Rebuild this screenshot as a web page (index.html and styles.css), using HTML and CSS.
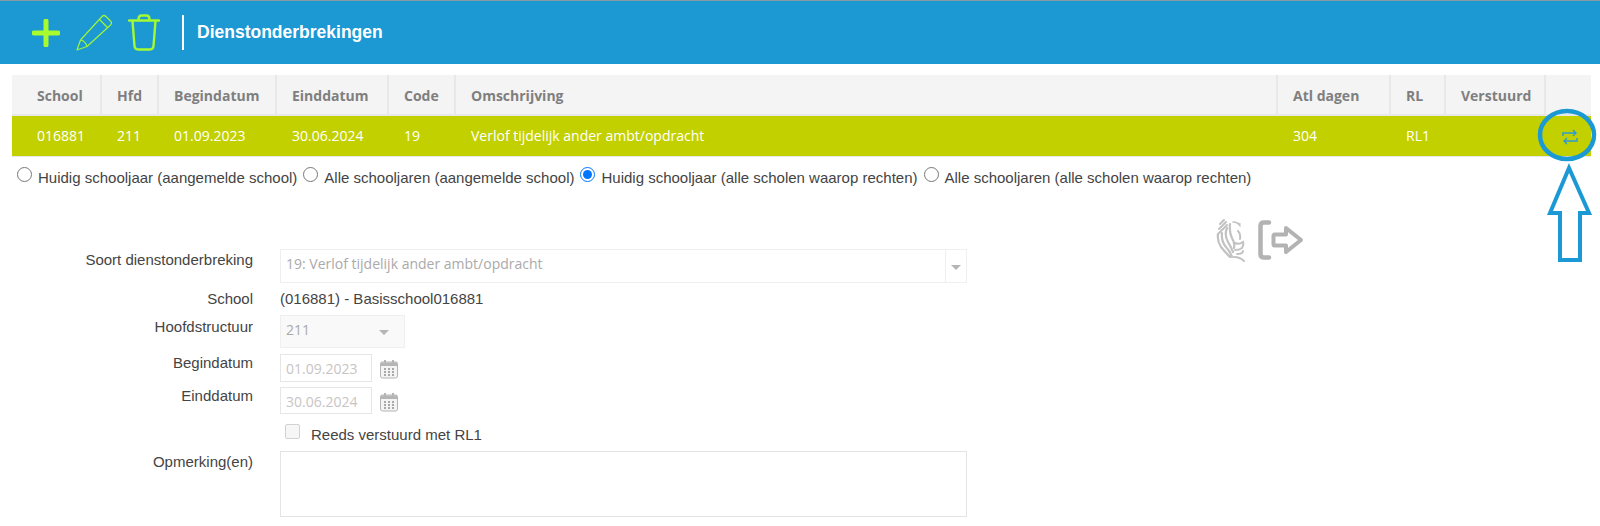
FILE: index.html
```html
<!DOCTYPE html>
<html lang="nl">
<head>
<meta charset="utf-8">
<title>Dienstonderbrekingen</title>
<link rel="stylesheet" href="styles.css">
</head>
<body>
<header class="topbar">
  <div class="tools">
    <svg class="ico plus" width="28" height="28" viewBox="0 0 28 28"><path d="M14 2v24M2 14h24" fill="none" stroke="#a8fb2c" stroke-width="5" stroke-linecap="round"/></svg>
    <svg class="ico pencil" width="36" height="37" viewBox="0 0 36 37"><path d="M1 36l3.500-10L26 2.500q2-2 4 0l4.500 4.500q2 2 0 4L11 32.500zM4.500 26q5 1 6.500 6.500M23 5l9 9" fill="none" stroke="#9cf53c" stroke-width="1.200" stroke-linejoin="round"/></svg>
    <svg class="ico trash" width="32" height="37" viewBox="0 0 32 37"><path d="M1 6.500h30M10.500 5.500q0-4 3-4h5q3 0 3 4M4.500 7l2 25q.3 3.500 3.500 3.500h12q3.200 0 3.500-3.500l2-25" fill="none" stroke="#a4fa30" stroke-width="2.400" stroke-linecap="round"/></svg>
  </div>
  <h1 class="title">Dienstonderbrekingen</h1>
</header>

<main class="page">
  <table class="grid">
    <colgroup>
      <col class="c1"><col class="c2"><col class="c3"><col class="c4"><col class="c5"><col class="c6"><col class="c7"><col class="c8"><col class="c9"><col class="c10">
    </colgroup>
    <thead>
      <tr>
        <th class="first">School</th><th>Hfd</th><th>Begindatum</th><th>Einddatum</th><th>Code</th><th>Omschrijving</th><th>Atl dagen</th><th>RL</th><th>Verstuurd</th><th></th>
      </tr>
    </thead>
    <tbody>
      <tr>
        <td class="first">016881</td><td>211</td><td>01.09.2023</td><td>30.06.2024</td><td>19</td><td>Verlof tijdelijk ander ambt/opdracht</td><td>304</td><td>RL1</td><td></td>
        <td class="action">
          <svg width="16" height="16" viewBox="0 0 16 16"><path d="M1 7V4h13M11 1l3 3-3 3M15 9v3H2M5 9l-3 3 3 3" fill="none" stroke="#2b9ad2" stroke-width="1.400"/></svg>
        </td>
      </tr>
    </tbody>
  </table>

  <div class="filters">
    <label class="filter"><input type="radio" name="scope">Huidig schooljaar (aangemelde school)</label>
    <label class="filter"><input type="radio" name="scope">Alle schooljaren (aangemelde school)</label>
    <label class="filter"><input type="radio" name="scope" checked>Huidig schooljaar (alle scholen waarop rechten)</label>
    <label class="filter"><input type="radio" name="scope">Alle schooljaren (alle scholen waarop rechten)</label>
  </div>

  <div class="content">
    <form class="form">
      <div class="row row-soort">
        <span class="lab">Soort dienstonderbreking</span>
        <div class="select wide"><span class="val">19: Verlof tijdelijk ander ambt/opdracht</span><span class="arrow"></span></div>
      </div>
      <div class="row row-school">
        <span class="lab">School</span>
        <span class="static">(016881) - Basisschool016881</span>
      </div>
      <div class="row row-hfd">
        <span class="lab">Hoofdstructuur</span>
        <div class="select narrow"><span class="val">211</span><span class="arrow plain"></span></div>
      </div>
      <div class="row row-begin">
        <span class="lab">Begindatum</span>
        <div class="date">01.09.2023</div>
        <svg class="cal" width="18" height="20" viewBox="0 0 18 20"><path d="M2 3h14q1.500 0 1.500 1.500V17q0 2-2 2h-13q-2 0-2-2V4.500Q.5 3 2 3z" fill="#f4f4f4" stroke="#b5b5b5"/><path d="M1 3.500h16V7H1z" fill="#b5b5b5"/><path d="M5 1v3M13 1v3" stroke="#b5b5b5" stroke-width="2"/><path d="M4 9h2v2H4zM8 9h2v2H8zM12 9h2v2h-2zM4 12h2v2H4zM8 12h2v2H8zM12 12h2v2h-2zM4 15h2v2H4zM8 15h2v2H8zM12 15h2v2h-2z" fill="#a8a8a8"/></svg>
      </div>
      <div class="row row-eind">
        <span class="lab">Einddatum</span>
        <div class="date">30.06.2024</div>
        <svg class="cal" width="18" height="20" viewBox="0 0 18 20"><path d="M2 3h14q1.500 0 1.500 1.500V17q0 2-2 2h-13q-2 0-2-2V4.500Q.5 3 2 3z" fill="#f4f4f4" stroke="#b5b5b5"/><path d="M1 3.500h16V7H1z" fill="#b5b5b5"/><path d="M5 1v3M13 1v3" stroke="#b5b5b5" stroke-width="2"/><path d="M4 9h2v2H4zM8 9h2v2H8zM12 9h2v2h-2zM4 12h2v2H4zM8 12h2v2H8zM12 12h2v2h-2zM4 15h2v2H4zM8 15h2v2H8zM12 15h2v2h-2z" fill="#a8a8a8"/></svg>
      </div>
      <div class="row row-check">
        <span class="lab"></span>
        <span class="box"></span>
        <span class="static">Reeds verstuurd met RL1</span>
      </div>
      <div class="row row-note">
        <span class="lab">Opmerking(en)</span>
        <div class="note"></div>
      </div>
    </form>
    <div class="logos">
      <svg width="29" height="43" viewBox="0 0 29 43"><g fill="none" stroke="#c2c2c2" stroke-linecap="round"><path d="M8 1L4 5M10 3L3 10M11 6L2 15" stroke-width="2"/><path d="M2 15q-1 7 3 13 4 5 9 10M6 14q-1 8 4 14 4 4 6 10M11 9q-3 7 1 14 3 5 5 10M14 5q-1 8 2 14 3 5 2 10" stroke-width="2.200"/><path d="M17 3q5 0 7 4M21 4l3 1" stroke-width="1.600"/><path d="M22 12q3 3 2 8M19 24q4 2 8-1 1 3-1 6-3 2-7 2M27 32q0 3-6 3M18 38q6 0 10 4" stroke-width="2"/></g></svg>
      <svg class="exit" width="46" height="40" viewBox="0 0 46 40"><path d="M11 2.500H6Q2.500 2.500 2.500 6v28Q2.500 37.500 6 37.500h5" fill="none" stroke="#b3b3b3" stroke-width="4.500" stroke-linecap="round"/><path d="M17 14.500h11V8l15 12-15 12v-6.500H17q-1.500 0-1.500-1.500v-8q0-1.500 1.500-1.500z" fill="none" stroke="#b3b3b3" stroke-width="4" stroke-linejoin="round"/></svg>
    </div>
  </div>
</main>

<svg class="callout" width="70" height="150" viewBox="0 0 70 150">
  <ellipse cx="35" cy="27" rx="27" ry="24" fill="none" stroke="#1b99d4" stroke-width="4.500"/>
  <path d="M37 60l20 45H48v47H28v-47H18z" fill="none" stroke="#1b99d4" stroke-width="4"/>
</svg>
</body>
</html>
```

FILE: styles.css
```css
* { box-sizing: border-box; }

html, body {
  margin: 0;
  padding: 0;
  background: #fff;
  overflow: hidden;
}

body {
  height: 526px;
  position: relative;
  font-family: "Liberation Sans", Arial, sans-serif;
  font-size: 15px;
  color: #444;
}

.topbar {
  height: 64px;
  background: #1c98d3;
  border-top: 1px solid #8a9aa3;
  display: flex;
  align-items: center;
  padding-left: 32px;
}

.tools {
  display: flex;
  align-items: center;
  gap: 16px;
  height: 35px;
  padding-right: 22px;
  border-right: 2px solid #fff;
}

.title {
  margin: 0 0 0 13px;
  font-size: 17.5px;
  font-weight: 700;
  color: #fff;
}

.page {
  padding: 11px 9px 0 12px;
}

.grid {
  width: 1579px;
  table-layout: fixed;
  border-collapse: collapse;
  font-family: "Open Sans", sans-serif;
  font-size: 14px;
}

.c1 { width: 89px; }
.c2 { width: 57px; }
.c3 { width: 118px; }
.c4 { width: 112px; }
.c5 { width: 67px; }
.c6 { width: 822px; }
.c7 { width: 113px; }
.c8 { width: 55px; }
.c9 { width: 100px; }
.c10 { width: 46px; }

.grid th {
  height: 40px;
  background: #f4f4f4;
  color: #7f7f7f;
  font-weight: 700;
  text-align: left;
  padding: 1px 0 0 15px;
  border-right: 2px solid #e8e8e8;
  border-bottom: 2px solid #e8e8e8;
}

.grid th:last-child { border-right: 0; }

.grid td {
  height: 41px;
  background: #c3d000;
  color: #fff;
  padding: 0 0 0 16px;
  border-bottom: 1px solid #e8e8e8;
}

.grid .first { padding-left: 25px; }

.grid .action {
  padding: 3px 0 0 17px;
  line-height: 0;
}

.filters {
  display: flex;
  height: 31px;
  align-items: center;
  padding-top: 10px;
  padding-left: 5px;
  white-space: nowrap;
}

.filter {
  display: flex;
  align-items: center;
  margin-right: 6px;
}

.filter input {
  margin: 0 6px 6px 0;
  width: 15px;
  height: 15px;
}

.content {
  display: flex;
  align-items: flex-start;
  padding-top: 29px;
}

.form {
  width: 955px;
  padding-top: 32px;
  flex: none;
}

.row {
  display: flex;
  align-items: flex-start;
}

.lab {
  flex: none;
  width: 241px;
  margin-right: 27px;
  text-align: right;
}

.static { color: #444; }

.select {
  display: flex;
  border: 1px solid #efefef;
  background: #fff;
  color: #aaa;
  align-items: center;
  font-family: "Open Sans", sans-serif;
  font-size: 14px;
}

.select .val { flex: 1; padding: 0 0 5px 5px; }
.narrow .val { padding-bottom: 3px; }

.arrow {
  width: 21px;
  align-self: stretch;
  border-left: 1px solid #efefef;
  position: relative;
}

.arrow.plain { border-left: 0; width: 30px; }

.arrow::after {
  content: "";
  position: absolute;
  left: 5px;
  top: 50%;
  margin-top: -1px;
  border-left: 5px solid transparent;
  border-right: 5px solid transparent;
  border-top: 5px solid #b5b5b5;
}

.wide { width: 687px; height: 34px; }
.narrow { width: 125px; height: 33px; background: #f9f9f9; }

.row-soort { height: 34px; }
.row-soort .lab { padding-top: 2px; }
.row-school { height: 32px; padding-top: 7px; }
.row-hfd { height: 39px; }
.row-hfd .lab { padding-top: 3px; }
.row-begin { height: 33px; }
.row-begin .lab { padding-top: 0; }
.row-eind { height: 37px; }
.row-eind .lab { padding-top: 0; }
.row-check { height: 27px; }
.row-check .static { margin: 2px 0 0 11px; }
.row-note { height: 66px; }
.row-note .lab { padding-top: 2px; }

.date {
  width: 92px;
  height: 28px;
  border: 1px solid #e6e6e6;
  color: #c9c4c4;
  padding: 4px 0 0 5px;
  font-family: "Open Sans", sans-serif;
  font-size: 14px;
}

.row-eind .date { height: 27px; }

.cal {
  margin: 5px 0 0 8px;
  flex: none;
}

.box {
  width: 15px;
  height: 15px;
  margin-left: 5px;
  border: 1px solid #d2d2d2;
  border-radius: 2px;
  background: #f6f6f6;
  flex: none;
}

.note {
  width: 687px;
  height: 66px;
  border: 1px solid #e4e4e4;
}

.logos {
  display: flex;
  gap: 13px;
  margin-left: 249px;
  align-items: center;
  margin-top: 2px;
}

.exit { margin-top: 0; }

.callout {
  position: absolute;
  left: 1532px;
  top: 108px;
  overflow: visible;
}
```
